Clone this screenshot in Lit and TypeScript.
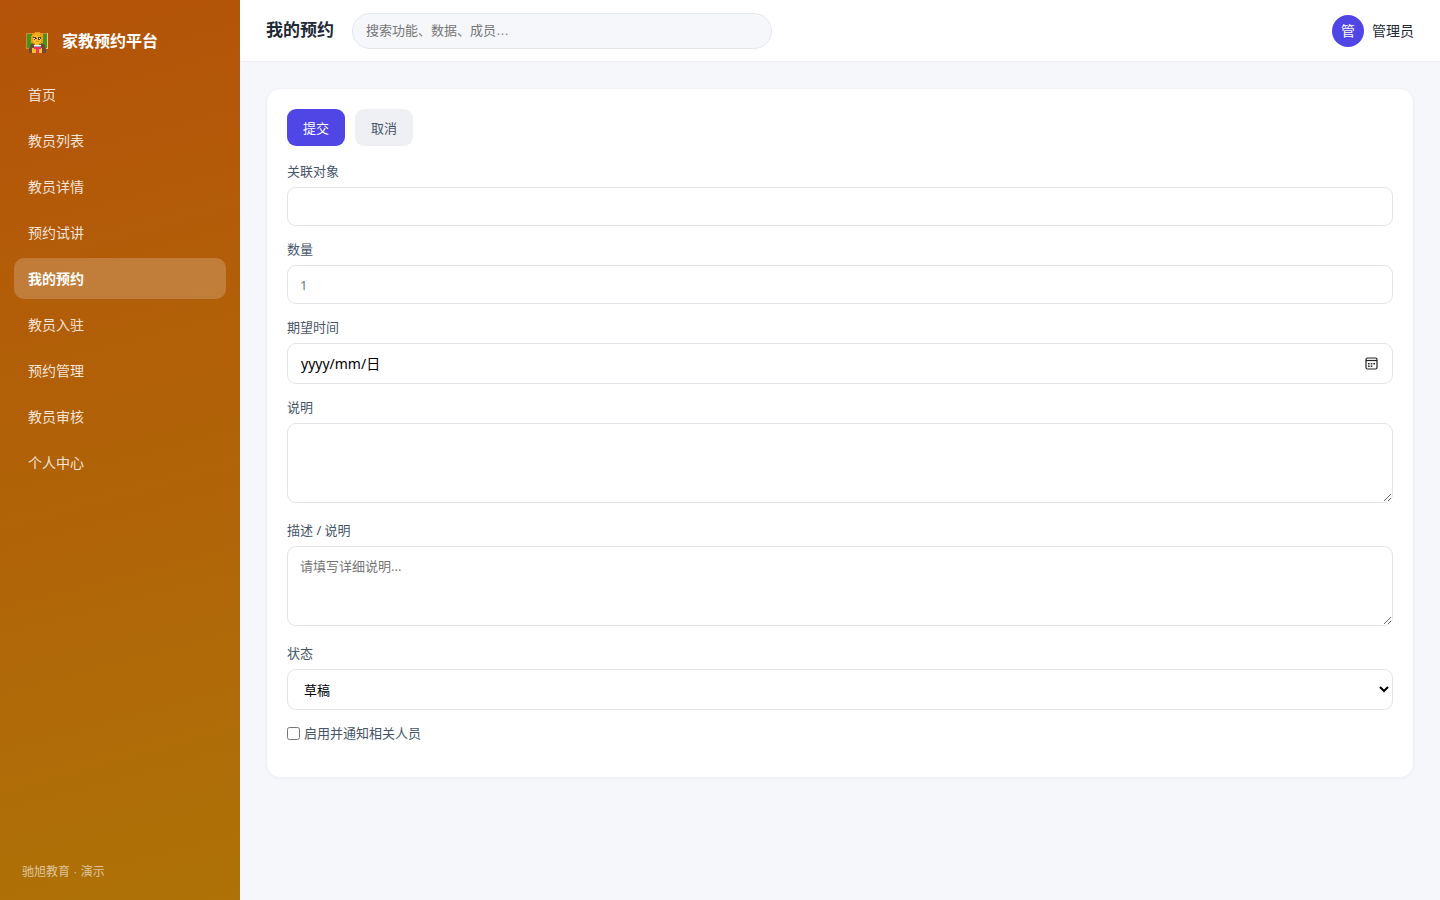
import { LitElement, html, css, svg } from "lit";
import { customElement, state } from "lit/decorators.js";
import { classMap } from "lit/directives/class-map.js";

const NAV = ["首页", "教员列表", "教员详情", "预约试讲", "我的预约", "教员入驻", "预约管理", "教员审核", "个人中心"];

const teacherIcon = svg`
  <rect x="0" y="1" width="22" height="16" fill="#c98a3c"/>
  <rect x="1" y="2" width="20" height="14" fill="#43951c"/>
  <path d="M21 1h1v16h-2v-1h1z" fill="#f5c478"/>
  <path d="M9 0h5v1h2v1h1v9h-2v1H7v-1H5V4h1V2h1V1h2z" fill="#f29a17"/>
  <path d="M8 4h6v1h1v5h-1v1h-1v2H9v-2H8v-1H7V5h1z" fill="#fbc02f"/>
  <path d="M9 2h5v1h-3v1H7V3h2z" fill="#ffb52c"/>
  <path d="M7 5h3v1h2V5h3v2h-1v1h-2V6h-1v1H9v1H8V6H7z" fill="#5b3528"/>
  <path d="M8 6h1v1H8zM13 6h1v1h-1z" fill="#fff"/>
  <rect x="10" y="9" width="3" height="1" fill="#e59600"/>
  <path d="M5 12h3v1h7v-1h3v1h1v3h1v5H3v-5h1v-3h1z" fill="#6d4a3c"/>
  <rect x="9" y="11" width="4" height="2" fill="#fbc02f"/>
  <rect x="8" y="13" width="7" height="1" fill="#fff"/>
  <rect x="8" y="14" width="7" height="1" fill="#9aa9b2"/>
  <rect x="6" y="16" width="10" height="5" fill="#fbc02f"/>
  <path d="M8 15h7v2h-2v4h-3v-4H8z" fill="#f62e62"/>`;

@customElement("app-root")
export class AppRoot extends LitElement {
  @state() private active = "我的预约";

  static styles = css`
    :host {
      display: grid;
      grid-template-columns: 240px 1fr;
      min-height: 100vh;
      background: #f5f7fb;
      color: #1f2937;
      font: 14px/20px "Liberation Sans", "Noto Sans CJK SC", sans-serif;
    }
    * { box-sizing: border-box; }
    .sidebar {
      display: flex;
      flex-direction: column;
      padding: 22px 14px 18px;
      background: linear-gradient(165deg, #b45309, #ae7207);
      color: #fff;
    }
    .brand {
      display: flex;
      gap: 14px;
      height: 36px;
      padding: 10px 12px 0;
      font-size: 16px;
      font-weight: 700;
    }
    .logo { width: 22px; height: 21px; }
    .nav { display: flex; flex-direction: column; gap: 5px; margin-top: 16px; }
    .link {
      height: 41px;
      padding: 0 14px;
      border-radius: 10px;
      color: rgba(255, 255, 255, 0.85);
      line-height: 43px;
      text-decoration: none;
    }
    .link.on { background: rgba(255, 255, 255, 0.2); color: #fff; font-weight: 700; }
    .foot { margin-top: auto; padding: 0 8px; font-size: 12px; color: rgba(255, 255, 255, 0.6); }
    .main { min-width: 0; }
    .topbar {
      display: flex;
      align-items: center;
      gap: 18px;
      height: 62px;
      padding: 0 26px;
      background: #fff;
      border-bottom: 1px solid #eceef3;
    }
    .title { margin: 0; font-size: 17px; line-height: 26px; white-space: nowrap; }
    .search {
      flex: 0 1 420px;
      min-width: 0;
      height: 36px;
      padding: 0 13px;
      border: 1px solid #e4e7ef;
      border-radius: 18px;
      background: #f6f7fb;
      font: inherit;
      font-size: 13px;
    }
    .user { display: flex; align-items: center; gap: 8px; margin-left: auto; white-space: nowrap; }
    .avatar {
      width: 32px;
      height: 32px;
      border-radius: 50%;
      background: #4f46e5;
      color: #fff;
      line-height: 32px;
      text-align: center;
    }
    .content { padding: 26px; }
    .card {
      padding: 20px;
      border: 1px solid #eef0f5;
      border-radius: 14px;
      background: #fff;
      box-shadow: 0 1px 3px rgba(30, 41, 90, 0.04);
      font-family: "Noto Sans", "Noto Sans CJK SC", sans-serif;
      font-size: 13px;
    }
    .actions { display: flex; gap: 10px; margin-bottom: 16px; }
    .btn {
      height: 37px;
      padding: 0 16px;
      border: 0;
      border-radius: 9px;
      background: #eef0f4;
      color: #475569;
      font: inherit;
    }
    .btn.primary { background: #4f46e5; color: #fff; }
    .field { display: flex; flex-direction: column; gap: 6px; margin-bottom: 14px; }
    .field.tall { margin-bottom: 18px; }
    .label, .check { color: #475569; line-height: 19px; }
    .control {
      width: 100%;
      height: 39px;
      margin: 0;
      padding: 9px 12px;
      border: 1px solid #e2e4ec;
      border-radius: 9px;
      background: #fff;
      color: #000;
      font: inherit;
    }
    .control.mid { height: 41px; }
    .control.area { display: block; height: 80px; resize: vertical; }
    .date { display: grid; align-items: center; }
    .date > * { grid-area: 1 / 1; }
    .date .control::-webkit-datetime-edit,
    .date .control::-webkit-calendar-picker-indicator { opacity: 0; }
    .format {
      z-index: 1;
      justify-self: start;
      padding-left: 14px;
      color: #000;
      font-size: 14px;
      pointer-events: none;
    }
    .calendar {
      z-index: 1;
      justify-self: end;
      width: 13px;
      height: 13px;
      margin-right: 15px;
      pointer-events: none;
    }
    .check { display: flex; align-items: center; gap: 4px; margin-bottom: 14px; }
    .box { width: 13px; height: 13px; margin: 0; }
  `;

  render() {
    return html`
      <aside class="sidebar">
        <div class="brand">
          <svg class="logo" viewBox="0 0 22 21" shape-rendering="crispEdges" aria-hidden="true">${teacherIcon}</svg>
          <span>家教预约平台</span>
        </div>
        <nav class="nav">
          ${NAV.map(
            (n) => html`<a href="#" class=${classMap({ link: true, on: n === this.active })}
              @click=${(e: Event) => { e.preventDefault(); this.active = n; }}>${n}</a>`
          )}
        </nav>
        <div class="foot">驰旭教育 · 演示</div>
      </aside>
      <div class="main">
        <header class="topbar">
          <h1 class="title">${this.active}</h1>
          <input class="search" type="text" aria-label="搜索" placeholder="搜索功能、数据、成员…" />
          <div class="user"><span class="avatar">管</span><span>管理员</span></div>
        </header>
        <main class="content">
          <form class="card" @submit=${(e: Event) => e.preventDefault()}>
            <div class="actions">
              <button class="btn primary" type="submit">提交</button>
              <button class="btn" type="button">取消</button>
            </div>
            <div class="field">
              <label class="label" for="target">关联对象</label>
              <input class="control" id="target" type="text" />
            </div>
            <div class="field">
              <label class="label" for="amount">数量</label>
              <input class="control" id="amount" type="number" placeholder="1" />
            </div>
            <div class="field">
              <label class="label" for="when">期望时间</label>
              <div class="date">
                <input class="control mid" id="when" type="date" />
                <span class="format" aria-hidden="true">yyyy/mm/日</span>
                <svg class="calendar" viewBox="0 0 13 13" aria-hidden="true">
                  <rect x="1" y="1" width="11" height="11" rx="1.5" fill="none" stroke="#222" stroke-width="1.2"/>
                  <path d="M1 3.5h11" stroke="#222" stroke-width="1.2"/>
                  <path d="M3 6h1.6v1.4H3zM5.7 6h1.6v1.4H5.7zM8.4 6H10v1.4H8.4zM3 8.5h1.6v1.4H3zM5.7 8.5h1.6v1.4H5.7z" fill="#222"/>
                </svg>
              </div>
            </div>
            <div class="field tall">
              <label class="label" for="note">说明</label>
              <textarea class="control area" id="note"></textarea>
            </div>
            <div class="field tall">
              <label class="label" for="detail">描述 / 说明</label>
              <textarea class="control area" id="detail" placeholder="请填写详细说明..."></textarea>
            </div>
            <div class="field">
              <label class="label" for="status">状态</label>
              <select class="control mid" id="status">
                <option>草稿</option>
              </select>
            </div>
            <label class="check"><input class="box" type="checkbox" />启用并通知相关人员</label>
          </form>
        </main>
      </div>
    `;
  }
}
